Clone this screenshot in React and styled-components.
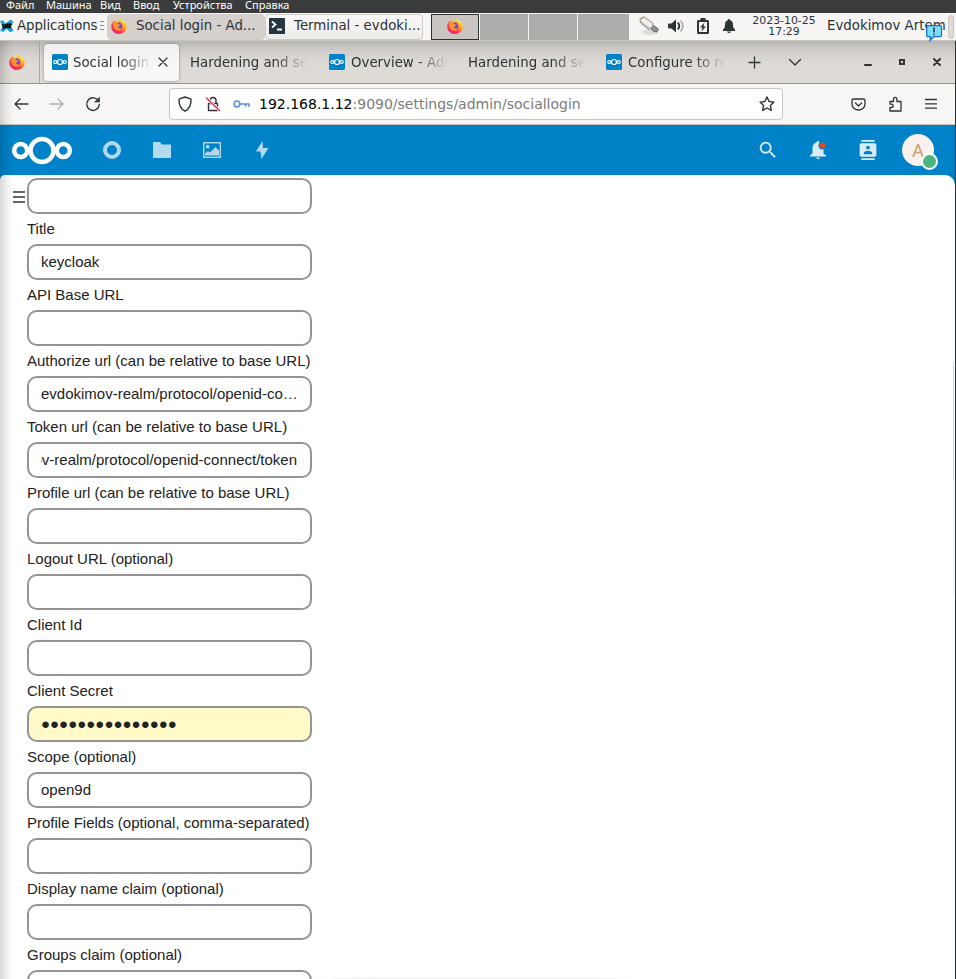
import React from "react";
import styled, { createGlobalStyle, css } from "styled-components";
import { MdContacts, MdSearch } from "react-icons/md";

const GlobalStyle = createGlobalStyle`
  * { box-sizing: border-box; }
  body { margin: 0; background: #fff; overflow: hidden; }
  svg { display: block; flex: none; }
`;

const ui = `"DejaVu Sans", sans-serif`;

const Screen = styled.div`
  position: relative;
  width: 956px;
  height: 979px;
  overflow: hidden;
  display: flex;
  flex-direction: column;
  font-family: ${ui};
  font-size: 13.33px;
  color: #2e3436;
`;

/* host window menu */
const HostMenu = styled.nav`
  flex: none;
  height: 13px;
  display: flex;
  padding-left: 6px;
  background: #3a3b3d;
`;
const HostItem = styled.span`
  flex: none;
  width: ${(p) => p.$w}px;
  height: 13px;
  font: 11px/13px "Noto Sans", "DejaVu Sans", sans-serif;
  line-height: 9px;
  letter-spacing: ${(p) => p.$ls || 0}px;
  color: #fff;
  white-space: nowrap;
`;

/* desktop panel */
const Panel = styled.header`
  flex: none;
  height: 28px;
  display: flex;
  align-items: center;
  background: #f6f5f4;
  border-bottom: 1px solid #c6c3bf;
  white-space: nowrap;
`;
const AppsButton = styled.div`
  width: 107px;
  display: flex;
  align-items: center;
  gap: 3px;
  padding-bottom: 2px;
  flex: none;
  letter-spacing: -0.08px;
`;
const Grip = styled.i`
  width: 4px;
  height: 10px;
  background: repeating-linear-gradient(#8b8e8f 0 1px, transparent 1px 4px);
`;
const TaskButton = styled.div`
  flex: none;
  height: 26px;
  width: 158px;
  display: flex;
  align-items: center;
  gap: 9px;
  padding: 0 0 2px 3px;
  border-radius: 4px;
  background: ${(p) => (p.$active ? "#d5d0cc" : "linear-gradient(#faf9f8, #edebe9)")};
  border: 1px solid ${(p) => (p.$active ? "#d5d0cc" : "#cfcac4")};
`;
const Pager = styled.div`
  flex: none;
  display: flex;
  gap: 1px;
  margin-left: 8px;
  height: 26px;
`;
const Workspace = styled.div`
  width: ${(p) => p.$w}px;
  display: flex;
  align-items: center;
  justify-content: center;
  padding-bottom: 1px;
  background: ${(p) => (p.$active ? "#c9c5c2" : "#adacaa")};
  border: ${(p) => (p.$active ? "1px solid #2e3436" : "0")};
`;
const Tray = styled.div`
  flex: none;
  width: 112px;
  margin-left: 10px;
  display: flex;
  align-items: center;
  gap: 9px;
  padding-bottom: 2px;
`;
const Clock = styled.div`
  flex: none;
  width: 68px;
  margin-left: -1px;
  text-align: center;
  font-size: 10.900px;
  line-height: 11px;
  padding-bottom: 1px;
`;
const UserName = styled.div`
  flex: none;
  width: 130px;
  padding: 0 0 2px 9px;
`;
const PanelStub = styled.div`
  width: 6px;
  height: 24px;
  flex: none;
  background: #dedad6;
  border: 1px solid #cdc7c2;
  border-radius: 3px;
`;

/* browser */
const Browser = styled.section`
  flex: 1;
  min-height: 0;
  display: flex;
  flex-direction: column;
  border-right: 1px solid #2b3133;
  position: relative;
`;
const EdgeShade = styled.div`
  position: absolute;
  inset: 0 auto 0 0;
  width: 13px;
  pointer-events: none;
  background: linear-gradient(90deg, rgba(0,0,0,.15), rgba(0,0,0,.06) 50%, transparent);
`;
const BottomShade = styled.div`
  position: absolute;
  left: 310px;
  bottom: 0;
  width: 330px;
  height: 2px;
  background: linear-gradient(90deg, transparent, rgba(0,0,0,.05) 20%, rgba(0,0,0,.05) 80%, transparent);
`;
const ScrollHint = styled.div`
  position: absolute;
  right: 1px;
  top: 321px;
  width: 1px;
  height: 234px;
  background: linear-gradient(#d8d8d8 50%, #ebebeb 50%);
`;
const TabStrip = styled.div`
  flex: none;
  height: 43px;
  display: flex;
  align-items: center;
  background: linear-gradient(#b7b5b3, #cbc8c5 18%, #dad6d3 42%, #dedad6 60%);
  border-bottom: 1px solid #929491;
`;
const PinnedTab = styled.div`
  flex: none;
  width: 40px;
  height: 42px;
  padding-left: 9px;
  display: flex;
  align-items: center;
  border-right: 1px solid #a9a7a4;
`;
const Tab = styled.div`
  flex: none;
  width: ${(p) => p.$w}px;
  height: 37px;
  display: flex;
  align-items: center;
  gap: 6px;
  padding-left: 8px;
  ${(p) =>
    p.$active &&
    css`
      margin-left: 4px;
      margin-right: 3px;
      gap: 5px;
      border-radius: 4px;
      background: linear-gradient(#f0efee, #f9f8f8 60%);
      box-shadow: 0 0 3px rgba(0, 0, 0, 0.4);
    `}
`;
const TabTitle = styled.span`
  flex: none;
  width: ${(p) => p.$w}px;
  overflow: hidden;
  white-space: nowrap;
  mask-image: linear-gradient(90deg, #000 calc(100% - 32px), transparent);
`;
const IconCell = styled.span`
  flex: none;
  width: ${(p) => p.$w}px;
  display: flex;
  align-items: center;
  justify-content: center;
`;
const Toolbar = styled.div`
  flex: none;
  height: 41px;
  display: flex;
  align-items: center;
  padding-left: 3px;
  background: #f7f6f5;
  border-bottom: 1px solid #c9c1b9;
`;
const UrlBar = styled.div`
  flex: none;
  width: 614px;
  height: 32px;
  margin-left: 58px;
  margin-right: 57px;
  display: flex;
  align-items: center;
  padding-left: 1px;
  border: 1px solid #c8c4bf;
  border-radius: 4px;
  background: #fff;
`;
const Address = styled.span`
  flex: 1;
  margin-left: 4px;
  color: #7b7b7b;
  font-size: 14px;
  b { font-weight: 400; color: #000; }
`;

/* cloud page */
const Page = styled.main`
  flex: 1;
  min-height: 0;
  display: flex;
  flex-direction: column;
  background: #0082c9;
`;
const CloudBar = styled.div`
  flex: none;
  height: 50px;
  display: flex;
  align-items: center;
  padding-left: 11px;
`;
const Logo = styled.svg`
  margin-right: 14px;
`;
const AppEntry = styled.span`
  flex: none;
  width: 50px;
  height: 50px;
  display: flex;
  align-items: center;
  justify-content: center;
  color: #fff;
  opacity: ${(p) => p.$o};
`;
const Spacer = styled.span`flex: 1;`;
const Avatar = styled.div`
  position: relative;
  flex: none;
  width: 32px;
  height: 32px;
  margin: 0 21px 0 9px;
  border-radius: 50%;
  background: #f8f2ee;
  color: #cf9b73;
  font: 18px/33px "Noto Sans", sans-serif;
  text-align: center;
`;
const Status = styled.i`
  position: absolute;
  left: 19px;
  top: 19px;
  width: 17px;
  height: 17px;
  border-radius: 50%;
  background: #49b382;
  border: 2px solid #fff;
`;
const Content = styled.div`
  flex: 1;
  min-height: 0;
  overflow: hidden;
  display: flex;
  align-items: flex-start;
  background: #fff;
  border-radius: 5px 10px 0 0;
  padding: 3px 0 0 13px;
  font: 15px/30px "Liberation Sans", Arial, sans-serif;
  color: #222;
`;
const Hamburger = styled.div`
  flex: none;
  width: 12px;
  height: 12px;
  margin: 13px 2px 0 0;
  border: solid #666;
  border-width: 2px 0;
  display: flex;
  align-items: center;
  &::after { content: ""; width: 12px; height: 2px; background: #666; }
`;
const Form = styled.div`
  width: 285px;
  flex: none;
`;
const Label = styled.div`
  height: 30px;
  white-space: nowrap;
`;
const Field = styled.div`
  height: 36px;
  border: 2px solid #949494;
  border-radius: 10px;
  padding: 0 12px;
  background: ${(p) => (p.$filled ? "#fffac8" : "#fff")};
`;
const Value = styled.div`
  height: 32px;
  line-height: 32px;
  display: flex;
  justify-content: ${(p) => (p.$end ? "flex-end" : "flex-start")};
  margin-right: ${(p) => (p.$end ? 1 : 0)}px;
  overflow: hidden;
  white-space: nowrap;
`;

const Firefox = ({ id }) => (
  <svg width="16" height="16" viewBox="0 0 16 16">
    <defs>
      <linearGradient id={id} x1="13" y1="1" x2="3" y2="15" gradientUnits="userSpaceOnUse">
        <stop offset="0.1" stopColor="#ffe63f" />
        <stop offset="0.42" stopColor="#ff9422" />
        <stop offset="0.68" stopColor="#ff4040" />
        <stop offset="1" stopColor="#e9178b" />
      </linearGradient>
    </defs>
    <path fill={`url(#${id})`} d="M3.2 2.2 4.8 4.1C5.5 3.9 6.2 3.9 6.9 4.1 7.5 2.6 8.7 1.8 9.7.1c.3 1.6 1.2 2.2 2.2 3.1C12.1 2.7 12 2.3 11.9 2c2.5 1.6 4 4.1 3.8 7C15.4 13 12 16 8 16S.6 13 .3 9.200C.1 7 .8 5.300 2 4.100 2.200 3.300 2.600 2.600 3.200 2.200Z" />
    <circle cx="8.2" cy="7.800" r="3.200" fill="#7b3fd1" />
    <path fill="#ff9828" d="M2.300 5.600c1.600-1.300 4.200-.8 5.300.9 1.200 0 1.900.2 2.100.6-.4 1-1.700 1.100-2.500 1.500-.4 1.700 1.600 2.700 3.200 1.800-.9 2.500-4.700 3-6.600.8C2.400 9.700 1.900 7.500 2.300 5.600Z" />
    <path fill="#ffc832" d="M9.500 3.600c2.500.8 4.200 3.200 3.300 6.200-.3-1.700-1-2.700-2.200-3.400.2-1.100-.4-2-1.100-2.800Z" />
  </svg>
);
const CloudFavicon = () => (
  <svg width="16" height="16" viewBox="0 0 16 16">
    <rect width="16" height="16" rx="1.500" fill="#0082c9" />
    <g fill="none" stroke="#fff" strokeWidth="1.200">
      <circle cx="8" cy="8" r="2.500" /><circle cx="3.300" cy="8" r="1.500" /><circle cx="12.700" cy="8" r="1.500" />
    </g>
  </svg>
);
const Mouse = () => (
  <svg width="14" height="16" viewBox="0 0 14 16">
    <path d="M0 3.500 2.500 2l3 3.500L10.500 1.500 13.500 4 10.500 8l3 4.500-3 2-4-3.500-3.500 3L0 12.500 3 8.500Z" fill="#16a4dc" />
    <path d="M1.500 6 4 6.500l3-1 4-.5 1.500 1.500L11 8l.5 2.500L6 10l-3 1.500L2.500 9Z" fill="#0b1518" />
  </svg>
);
const Line = ({ w = 16, h = 16, d, c = "#2e3436", s = 1.4, children }) => (
  <svg width={w} height={h} viewBox={`0 0 ${w} ${h}`} fill="none" stroke={c} strokeWidth={s} strokeLinecap="round" strokeLinejoin="round">
    {d && <path d={d} />}
    {children}
  </svg>
);
const TerminalIcon = () => (
  <svg width="16" height="16" viewBox="0 0 16 16">
    <rect width="16" height="16" rx=".5" fill="#253640" />
    <path d="M3 3.500 6.500 6.500 3 9.500M8 11.500h5" fill="none" stroke="#fff" strokeWidth="1.800" />
  </svg>
);
const NetworkIcon = () => (
  <svg width="20" height="20" viewBox="0 0 20 20">
    <ellipse cx="11" cy="16" rx="8" ry="3" fill="#dcdcda" />
    <path d="m12 13 2.500-3.500 5 3.500-1.500 3-3-.5Z" fill="#92938f" stroke="#6c6e69" />
    <path d="M1 2.500 5 .8 13.500 7l.5 3-4 3.500L1.500 7Z" fill="#eeeeea" stroke="#8c8d88" />
    <path d="M1.800 6 10.500 12.500" stroke="#b4b5b0" strokeWidth="1.500" />
    <path d="M2.500 3.500 4 2.500" stroke="#e5bb35" strokeWidth="1.500" />
  </svg>
);
const VolumeIcon = () => (
  <svg width="17" height="16" viewBox="0 0 17 16">
    <path d="M1 5.500h2.500L8 1.500v13L3.500 10.500H1Q0 10.500 0 9.500v-3q0-1 1-1Z" fill="#2e3436" />
    <path d="M9.800 4.500q3 3.500 0 7" fill="none" stroke="#2e3436" strokeWidth="1.900" />
    <path d="M12.500 2.500q5 5.500 0 11" fill="none" stroke="#aaaead" strokeWidth="1.600" />
  </svg>
);
const BatteryIcon = () => (
  <svg width="12" height="16" viewBox="0 0 12 16">
    <path d="M3.500 0h5v2H11l1 1v12l-1 1H1l-1-1V3l1-1h2.500Z" fill="#2e3436" />
    <path d="M2 4h8v10H2Z" fill="#f6f5f4" />
    <path d="M7.500 4.500 3 9.500h2.500L4.500 13.500 9 8.500H6.500Z" fill="#2e3436" />
  </svg>
);
const BellIcon = () => (
  <svg width="12" height="14" viewBox="0 0 12 14">
    <path d="M6 0C7 0 7.300.8 7.300 1.300 9.500 2 10 4 10 6c0 2.500.7 3.500 2 4.500V12H0v-1.500C1.300 9.500 2 8.500 2 6c0-2 .5-4 2.700-4.700C4.700.8 5 0 6 0ZM4 12.500h4Q7.500 14 6 14T4 12.500Z" fill="#2e3436" />
  </svg>
);

/* balloon that floats above the panel's end */
const Balloon = styled.svg`
  position: absolute;
  left: 926px;
  top: 25px;
`;

const hostMenu = [["Файл", 40, 0], ["Машина", 54, 0], ["Вид", 33, 0], ["Ввод", 40, 0], ["Устройства", 72, 0], ["Справка", 60, 0]];

const fields = [
  { label: "Title", value: "keycloak" },
  { label: "API Base URL" },
  { label: "Authorize url (can be relative to base URL)", value: "evdokimov-realm/protocol/openid-co…" },
  { label: "Token url (can be relative to base URL)", value: "ov-realm/protocol/openid-connect/token", end: true },
  { label: "Profile url (can be relative to base URL)" },
  { label: "Logout URL (optional)" },
  { label: "Client Id" },
  { label: "Client Secret", value: "●".repeat(15), filled: true },
  { label: "Scope (optional)", value: "open9d" },
  { label: "Profile Fields (optional, comma-separated)" },
  { label: "Display name claim (optional)" },
  { label: "Groups claim (optional)" },
];

export default function App() {
  return (
    <Screen>
      <GlobalStyle />
      <HostMenu>
        {hostMenu.map(([t, w, ls]) => <HostItem key={t} $w={w} $ls={ls}>{t}</HostItem>)}
      </HostMenu>

      <Panel>
        <AppsButton><Mouse />Applications<Grip /></AppsButton>
        <TaskButton $active><Firefox id="ff1" />Social login - Ad...</TaskButton>
        <TaskButton><TerminalIcon />Terminal - evdoki...</TaskButton>
        <Pager>
          <Workspace $active $w={48}><Firefox id="ff2" /></Workspace>
          <Workspace $w={48} />
          <Workspace $w={48} />
          <Workspace $w={51} />
        </Pager>
        <Tray><NetworkIcon /><VolumeIcon /><IconCell $w={17}><BatteryIcon /></IconCell><IconCell $w={17}><BellIcon /></IconCell></Tray>
        <Clock>2023-10-25<br />17:29</Clock>
        <UserName>Evdokimov Artem</UserName>
        <PanelStub />
      </Panel>

      <Browser>
        <TabStrip>
          <PinnedTab><Firefox id="ff3" /></PinnedTab>
          <Tab $active $w={135}>
            <CloudFavicon /><TabTitle $w={80}>Social login - Ad</TabTitle>
            <Line w={10} h={10} d="M1 1 9 9M9 1 1 9" s={1.2} />
          </Tab>
          <Tab $w={139}><TabTitle $w={117}>Hardening and security</TabTitle></Tab>
          <Tab $w={139}><CloudFavicon /><TabTitle $w={97}>Overview - Admin</TabTitle></Tab>
          <Tab $w={138}><TabTitle $w={117}>Hardening and security</TabTitle></Tab>
          <Tab $w={136}><CloudFavicon /><TabTitle $w={97}>Configure to redirect</TabTitle></Tab>
          <IconCell $w={40}><Line w={13} h={13} d="M6.500 1v11M1 6.500h11" s={1.300} /></IconCell>
          <IconCell $w={41}><Line w={14} h={9} d="m1.500 1.500 5.500 5.500 5.500-5.500" s={1.300} /></IconCell>
          <Spacer />
          <IconCell $w={34}><Line w={10} h={10} d="M2 8h6" s={2} /></IconCell>
          <IconCell $w={34}><svg width="8" height="8"><path d="M2 2h4v4H2Z" fill="none" stroke="#2e3436" strokeWidth="2" /></svg></IconCell>
          <IconCell $w={36}><Line w={10} h={10} d="m2 2 6 6M8 2 2 8" s={2} /></IconCell>
        </TabStrip>

        <Toolbar>
          <IconCell $w={36}><Line d="M15 8H2M7 3 2 8l5 5" s={1.300} /></IconCell>
          <IconCell $w={36}><Line c="#abaeae" d="M1 8h13M9 3l5 5-5 5" s={1.300} /></IconCell>
          <IconCell $w={36}>
            <Line><path d="M13.500 5A6.300 6.300 0 1 0 14.300 8.500" /><path d="M14.500 1.500V6H10Z" fill="#2e3436" strokeWidth=".7" /></Line>
          </IconCell>
          <UrlBar>
            <IconCell $w={28}><Line d="M8 1 14 3.200C14.300 9 12 13 8 15.200 4 13 1.700 9 2 3.200Z" /></IconCell>
            <IconCell $w={28}>
              <Line><path d="M3.500 7.500h9v7h-9ZM5 7V4.500a3 3 0 0 1 6 0V7" /><path d="m1.500 2 13 12.500" stroke="#fff" strokeWidth="3" /><path d="m1.500 2 13 12.500" stroke="#e22850" /></Line>
            </IconCell>
            <IconCell $w={28}><Line w={17} h={10} c="#5590e2" s={1.500}><circle cx="4" cy="5" r="2.900" /><path d="M7 5h9v2.500M12.500 5v2" /></Line></IconCell>
            <Address><b>192.168.1.12</b>:9090/settings/admin/sociallogin</Address>
            <IconCell $w={31}><Line d="m8 1 2.100 4.500 4.900.6-3.600 3.300.9 5L8 12l-4.300 2.400.9-5L1 6.100l4.900-.6Z" /></IconCell>
          </UrlBar>
          <IconCell $w={36}><Line w={15} h={15} d="M2.500 2h10Q14 2 14 3.500V7a6.500 6 0 0 1-13 0V3.500Q1 2 2.500 2ZM4.500 6l3 3 3-3" s={1.300} /></IconCell>
          <IconCell $w={37}><Line d="M3 5.500h3.500V3a1.700 1.700 0 0 1 3.400 0v2.500H14V15H3v-3.500h1.500a1.700 1.700 0 0 0 0-3.400H3Z" s={1.300} /></IconCell>
          <IconCell $w={36}><Line w={14} h={12} d="M1.500 1.500h11M1.500 5.800h11M1.500 10.200h11" s={1.300} /></IconCell>
        </Toolbar>

        <Page>
          <CloudBar>
            <Logo width="62" height="30" viewBox="0 0 62 30" fill="none" stroke="#fff">
              <circle cx="31" cy="15.500" r="11.500" strokeWidth="4.500" />
              <circle cx="9.700" cy="15.500" r="6.500" strokeWidth="4.500" />
              <circle cx="52.300" cy="15.500" r="6.500" strokeWidth="4.500" />
            </Logo>
            <AppEntry $o={0.7}><svg width="18" height="18"><circle cx="9" cy="9" r="7" fill="none" stroke="#fff" strokeWidth="4" /></svg></AppEntry>
            <AppEntry $o={0.7}><svg width="18" height="18" viewBox="0 0 18 18"><path fill="#fff" d="M0 1.500Q0 1 .500 1H7l2 2.500h8.500q.5 0 .5.500v12.500q0 .500-.500.500H.500Q0 17 0 16.500Z" /></svg></AppEntry>
            <AppEntry $o={0.7}>
              <svg width="18" height="18" viewBox="0 0 18 18">
                <rect x=".7" y="1.700" width="16.600" height="14.600" fill="none" stroke="#fff" strokeWidth="1.400" />
                <circle cx="4.700" cy="5.700" r="1.900" fill="#fff" />
                <path fill="#fff" d="M2 14.500v-2L5 10l2 1.500L12.500 6l3.500 3.500v5Z" />
              </svg>
            </AppEntry>
            <AppEntry $o={0.7}><svg width="14" height="18" viewBox="0 0 14 18"><path fill="#fff" d="M7.500 0 1 10.500h4.500L6.500 18 13.500 7H8Z" /></svg></AppEntry>
            <Spacer />
            <AppEntry $o={0.85}><MdSearch size={22} /></AppEntry>
            <AppEntry $o={1}>
              <svg width="18" height="18" viewBox="0 0 18 18">
                <path fill="#d9ecf7" d="M9 0q1.500 0 1.500 1.500 4 1.200 4 5.500v5.500l2.500 2V15.500H1v-1l2.500-2V7q0-4.300 4-5.500Q7.500 0 9 0ZM7 16.500h4Q10.500 18 9 18T7 16.500Z" />
                <circle cx="13.500" cy="4.500" r="4" fill="#0082c9" /><circle cx="13.500" cy="4.500" r="3" fill="#db4a22" />
              </svg>
            </AppEntry>
            <AppEntry $o={0.85}><MdContacts size={20} /></AppEntry>
            <Avatar>A<Status /></Avatar>
          </CloudBar>
          <Content>
            <Hamburger />
            <Form>
              <Field />
              {fields.map((f) => (
                <React.Fragment key={f.label}>
                  <Label>{f.label}</Label>
                  <Field $filled={f.filled}><Value $end={f.end}>{f.value}</Value></Field>
                </React.Fragment>
              ))}
              <Field />
            </Form>
          </Content>
        </Page>
        <EdgeShade />
        <ScrollHint />
        <BottomShade />
      </Browser>

      <Balloon width="17" height="17" viewBox="0 0 17 17">
        <path d="M2 .7h12q1.500 0 1.500 1.500v8q0 1.500-1.500 1.500H8L4 15.500 4.500 11.700H2Q.7 11.700.7 10.200v-8Q.7.700 2 .7Z" fill="#7ddcff" stroke="#1c6fd0" strokeWidth="1.300" />
        <path d="M8 2.500v5M8 8.700v1.500" stroke="#123" strokeWidth="1.300" />
      </Balloon>
    </Screen>
  );
}
